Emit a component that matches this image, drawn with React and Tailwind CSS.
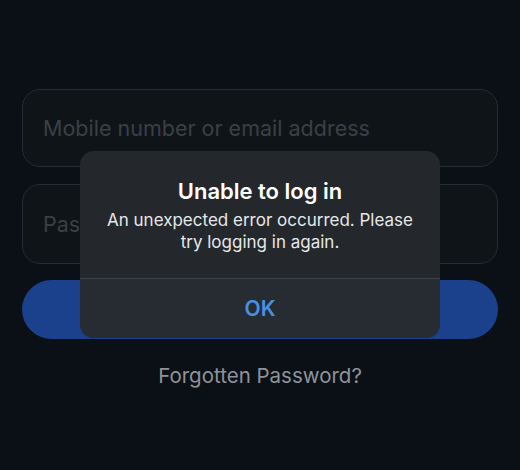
import React from 'react';

const App = () => {
  return (
    <div className="relative h-[470px] w-[520px] overflow-hidden bg-[#0b1016] font-['Inter',sans-serif]">
      {/* Login form behind the alert */}
      <div className="flex flex-col px-[22px] pt-[89px]">
        <div className="flex h-[78px] items-center rounded-[18px] border border-[#262c33] bg-[#0f1418] px-[20px]">
          <span className="text-[21.5px] text-[#3a4047]">Mobile number or email address</span>
        </div>
        <div className="mt-[17px] flex h-[80px] items-center rounded-[18px] border border-[#262c33] bg-[#0f1418] px-[20px]">
          <span className="text-[21.5px] text-[#3a4047]">Password</span>
        </div>
        <div className="mt-[16px] h-[59px] rounded-full bg-[#1b408c]" />
        <p className="mt-[22px] text-center text-[20.5px] text-[#8e939a]">Forgotten Password?</p>
      </div>

      {/* Alert overlay */}
      <div className="absolute left-[80px] top-[151px] flex h-[187px] w-[360px] flex-col overflow-hidden rounded-[14px] bg-[#24282d]">
        <div className="flex flex-1 flex-col items-center px-3 pt-[27px] text-center">
          <h2 className="text-[22px] font-semibold leading-[27px] text-white">Unable to log in</h2>
          <p className="mt-[4px] text-[17px] leading-[22px] text-[#e6e7e9]">
            An unexpected error occurred. Please
            <br />
            try logging in again.
          </p>
        </div>
        <div className="h-px bg-[#3d4249]" />
        <div className="flex h-[59px] items-center justify-center bg-[#272c33]">
          <span className="text-[21px] font-semibold text-[#4a90e2]">OK</span>
        </div>
      </div>
    </div>
  );
};

export default App;
